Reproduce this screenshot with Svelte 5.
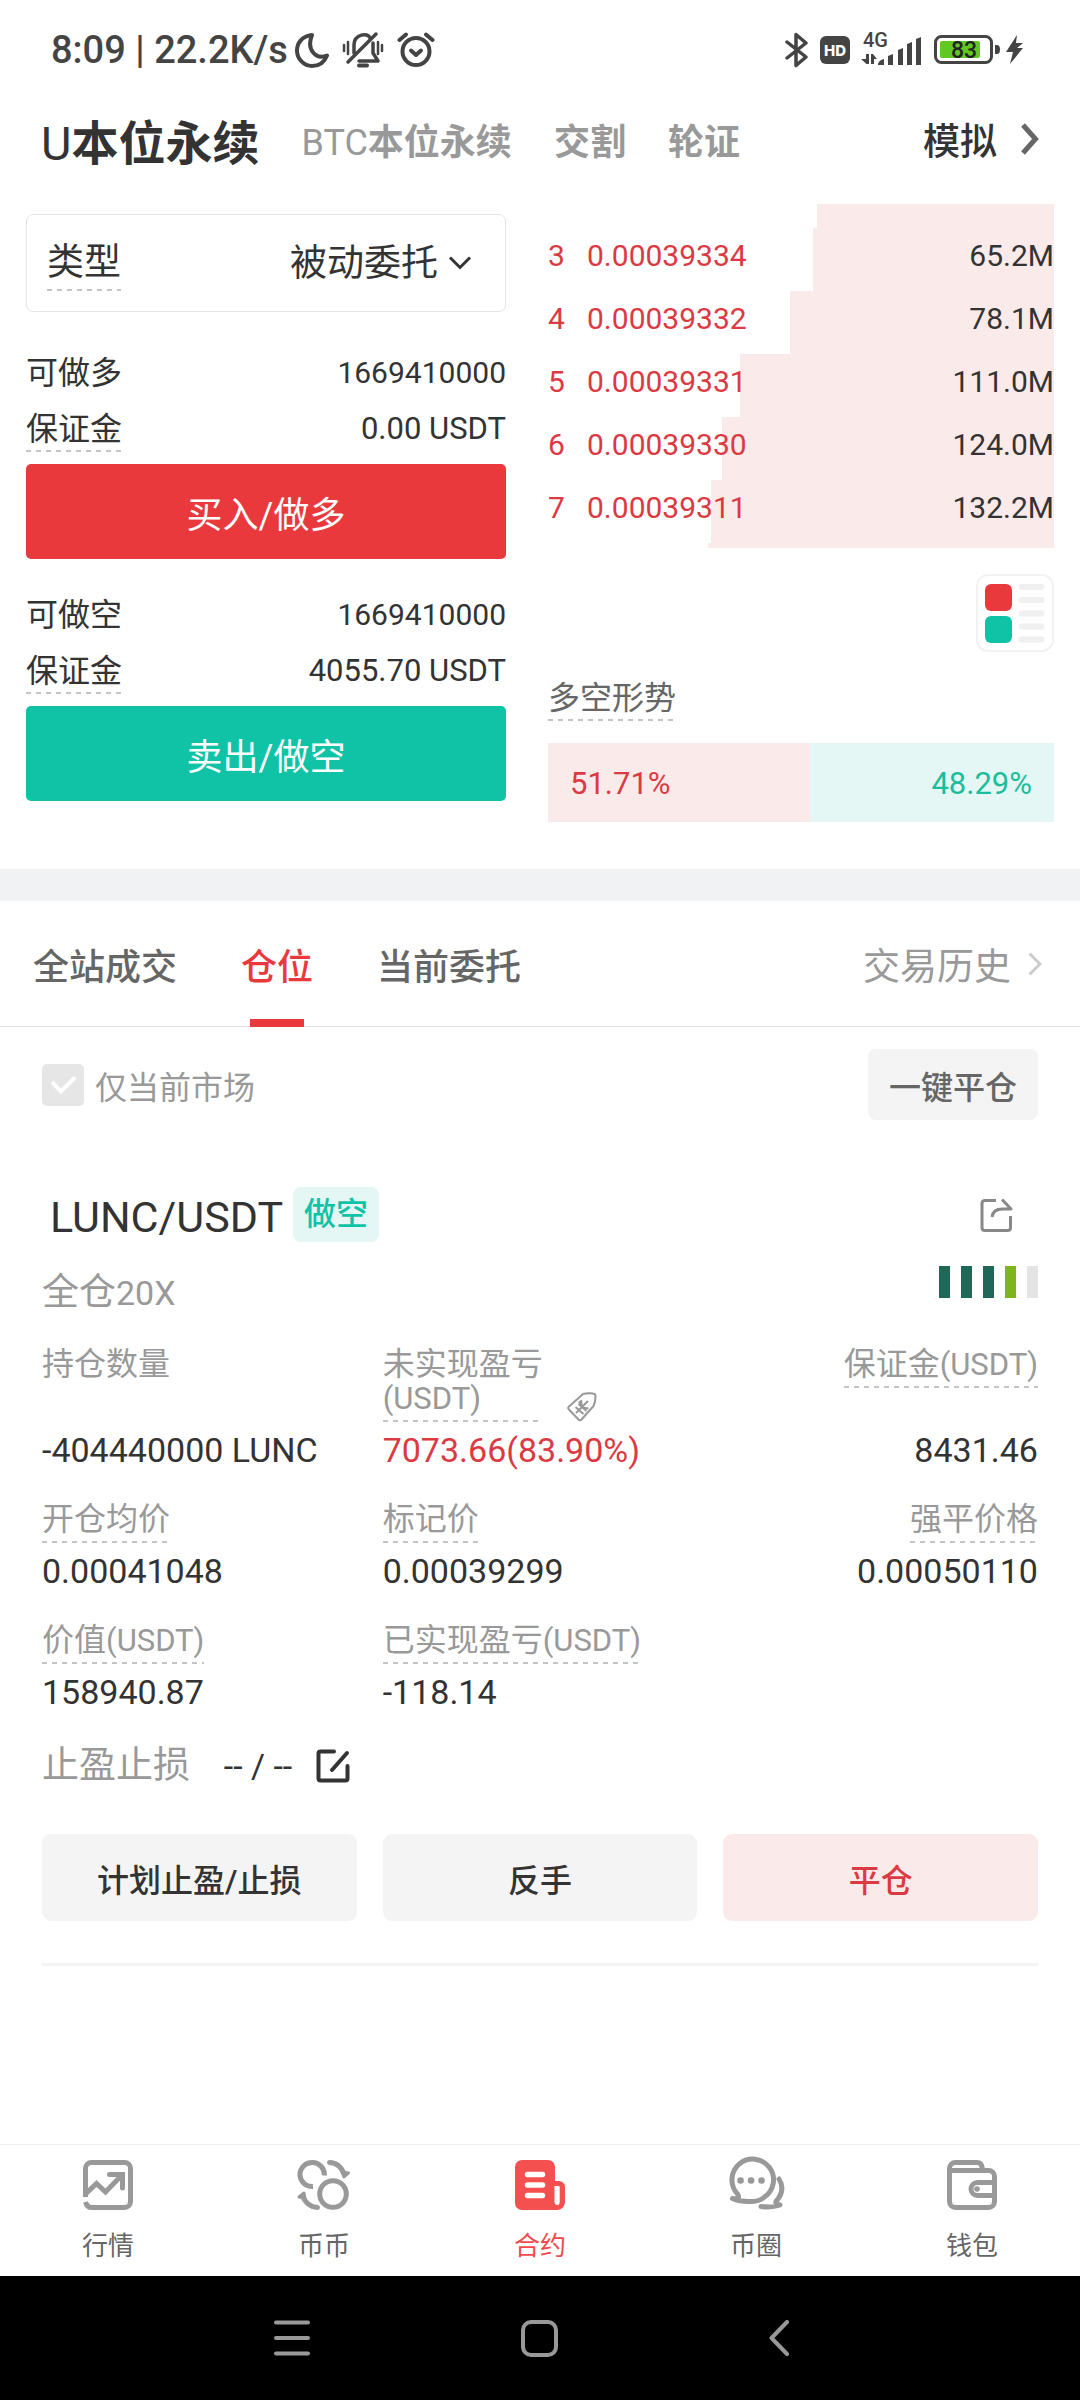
<script lang="ts">
  let orderType = $state('被动委托');
  let market = $state('u');
  let tab = $state('positions');
  let onlyCurrent = $state(true);
  let nav = $state('contract');

  const markets = [
    { id: 'u', latin: 'U', text: '本位永续' },
    { id: 'btc', latin: 'BTC', text: '本位永续' },
    { id: 'delivery', latin: '', text: '交割' },
    { id: 'warrant', latin: '', text: '轮证' },
  ];

  const sides = [
    { id: 'long', label: '可做多', amount: '1669410000', margin: '0.00 USDT', action: '买入/做多' },
    { id: 'short', label: '可做空', amount: '1669410000', margin: '4055.70 USDT', action: '卖出/做空' },
  ];

  const asks = [
    { level: 3, price: '0.00039334', volume: '65.2M', depth: 47.6 },
    { level: 4, price: '0.00039332', volume: '78.1M', depth: 52.2 },
    { level: 5, price: '0.00039331', volume: '111.0M', depth: 62.1 },
    { level: 6, price: '0.00039330', volume: '124.0M', depth: 65.6 },
    { level: 7, price: '0.00039311', volume: '132.2M', depth: 67.8 },
  ];

  const longRatio = 51.71;
  const shortRatio = 48.29;

  const tabs = [
    { id: 'trades', text: '全站成交' },
    { id: 'positions', text: '仓位' },
    { id: 'orders', text: '当前委托' },
  ];

  const fields = [
    { label: '持仓数量', unit: '', value: '-404440000 LUNC', hint: false },
    { label: '未实现盈亏', unit: '(USDT)', value: '7073.66(83.90%)', hint: true, tag: true },
    { label: '保证金', unit: '(USDT)', value: '8431.46', hint: true },
    { label: '开仓均价', unit: '', value: '0.00041048', hint: true },
    { label: '标记价', unit: '', value: '0.00039299', hint: true },
    { label: '强平价格', unit: '', value: '0.00050110', hint: true },
    { label: '价值', unit: '(USDT)', value: '158940.87', hint: true },
    { label: '已实现盈亏', unit: '(USDT)', value: '-118.14', hint: true },
  ];

  const risk = ['dark', 'dark', 'dark', 'light', 'off'];

  const navItems = [
    { id: 'market', text: '行情' },
    { id: 'spot', text: '币币' },
    { id: 'contract', text: '合约' },
    { id: 'community', text: '币圈' },
    { id: 'wallet', text: '钱包' },
  ];
</script>

<div class="app">
  <div class="status">
    <span class="status__time">8:09 | 22.2K/s</span>
    <div class="status__left">
      <svg width="34" height="36" viewBox="0 0 34 36" fill="none" stroke="#444" stroke-width="4" stroke-linejoin="round">
        <path d="M17 3C7 4 2 11 2 18.500C2 27 9 34 17 34C24 34 29.500 30 32 23.500C21 28 11 18 17 3Z" />
      </svg>
      <svg width="42" height="38" viewBox="0 0 42 38" fill="none" stroke="#444" stroke-width="3" stroke-linecap="round">
        <path d="M2 14v6M6 11v12M36 11v12M40 14v6" stroke-width="2.500" />
        <path d="M12 22V14C12 3 26 1 28 7M6 31L34 3" stroke-width="3.500" />
        <path d="M31 12v10l5 8H17" stroke-width="3.500" stroke-linejoin="round" />
        <path d="M17 34.500h8" stroke-width="4" />
      </svg>
      <svg width="38" height="36" viewBox="0 0 38 36" fill="none" stroke="#444" stroke-width="4" stroke-linecap="round">
        <circle cx="19" cy="19.500" r="13.500" />
        <path d="M2.500 8L9 2.500M35.500 8L29 2.500" />
        <path d="M14 18.500l5 4.500 5-4.500" stroke-linejoin="round" />
      </svg>
    </div>
    <div class="status__right">
      <svg width="24" height="36" viewBox="0 0 24 36" fill="none" stroke="#444" stroke-width="3.500" stroke-linejoin="round" stroke-linecap="round">
        <path d="M2 10l19 15-10 8.500V2.500l10 8.500L2 26" />
      </svg>
      <svg width="30" height="28" viewBox="0 0 30 28">
        <rect width="30" height="28" rx="6" fill="#444" />
        <text x="15" y="19.500" text-anchor="middle" font-family="Inter, sans-serif" font-size="15" font-weight="800" fill="#fff">HD</text>
      </svg>
      <svg width="62" height="48" viewBox="0 -6 62 48" fill="#444">
        <text x="2" y="15" font-family="Roboto, sans-serif" font-size="20" font-weight="500">4G</text>
        <path d="M5 22h3v10h-2.500L0 27h5zM10 32V22h2l4 5h-3v5z" />
        <path d="M17 32q1-4 6-5v6h-6zM27 24l5-2v11h-5zM37 18l5-2v17h-5zM46 12l5-2v23h-5zM55 7l5-2v28h-5z" />
      </svg>
      <svg width="90" height="30" viewBox="0 0 90 30">
        <rect x="1.500" y="1.500" width="56" height="26" rx="6" fill="none" stroke="#444" stroke-width="3" />
        <rect x="6" y="6" width="40" height="17" rx="2" fill="#60c820" />
        <path d="M61 10h2q3 0 3 4.500t-3 4.500h-2z" fill="#444" />
        <text x="30" y="22.500" text-anchor="middle" font-family="Roboto, sans-serif" font-size="23" font-weight="500" fill="#222">83</text>
        <path d="M83 0L72 17h7l-3 12 13-16h-6l6-5h-7z" fill="#444" />
      </svg>
    </div>
  </div>

  <header class="header">
    <nav class="markets">
      {#each markets as m}
        <button class="markets__item" class:markets__item--on={market === m.id} onclick={() => (market = m.id)}>
          {#if m.latin}<span class="markets__latin">{m.latin}</span>{/if}{m.text}
        </button>
      {/each}
    </nav>
    <a class="demo" href="#demo">
      模拟
      <svg width="18" height="32" viewBox="0 0 18 32" fill="none" stroke="#666" stroke-width="5">
        <path d="M2 2l12.500 14L2 30" />
      </svg>
    </a>
  </header>

  <section class="trade">
    <div class="order">
      <div class="type">
        <label class="type__label dashed" for="order-type">类型</label>
        <div class="type__control">
          <select id="order-type" class="type__select" bind:value={orderType}>
            <option>被动委托</option>
          </select>
          <svg width="22" height="14" viewBox="0 0 22 14" fill="none" stroke="#333" stroke-width="3">
            <path d="M1 1.500l10 10 10-10" />
          </svg>
        </div>
      </div>
      {#each sides as side}
        <div class="side">
          <div class="side__row">
            <span>{side.label}</span>
            <span class="side__amount">{side.amount}</span>
          </div>
          <div class="side__row">
            <span class="dashed">保证金</span>
            <span class="num">{side.margin}</span>
          </div>
          <button class="side__action side__action--{side.id}">{side.action}</button>
        </div>
      {/each}
    </div>

    <div class="book">
      <div class="asks">
        <div class="ask ask--first"><div class="ask__depth" style:width="46.8%"></div></div>
        {#each asks as ask}
          <div class="ask">
            <div class="ask__depth" style:width="{ask.depth}%"></div>
            <span class="ask__level">{ask.level}</span>
            <span class="ask__price">{ask.price}</span>
            <span class="ask__volume">{ask.volume}</span>
          </div>
        {/each}
        <div class="ask ask--last"><div class="ask__depth" style:width="68.4%"></div></div>
      </div>

      <button class="layout" aria-label="盘口布局">
        <svg width="78" height="78" viewBox="0 0 78 78">
          <rect x="1" y="1" width="76" height="76" rx="11" fill="#fff" stroke="#f0f2f4" stroke-width="2" />
          <rect x="9" y="10" width="27" height="27" rx="6" fill="#e9393d" />
          <rect x="9" y="42" width="27" height="27" rx="6" fill="#11c3a6" />
          <path d="M45.500 13h20M45.500 26h20M45.500 39.500h20M45.500 52.500h20M45.500 65.500h20" stroke="#f0f0f0" stroke-width="6" stroke-linecap="round" />
        </svg>
      </button>

      <span class="trend dashed">多空形势</span>
      <div class="ratio">
        <div class="ratio__long" style:width="{longRatio}%">{longRatio}%</div>
        <div class="ratio__short">{shortRatio}%</div>
      </div>
    </div>
  </section>

  <div class="tabs">
    {#each tabs as t}
      <button class="tabs__item" class:tabs__item--on={tab === t.id} onclick={() => (tab = t.id)}>{t.text}</button>
    {/each}
    <a class="tabs__history" href="#history">
      交易历史
      <svg width="14" height="24" viewBox="0 0 14 24" fill="none" stroke="#ccc" stroke-width="3">
        <path d="M1.500 1.500l10.500 10.500-10.500 10.500" />
      </svg>
    </a>
  </div>

  <main class="position">
    <div class="toolbar">
      <label class="check">
        <input class="check__box" type="checkbox" bind:checked={onlyCurrent} />
        仅当前市场
      </label>
      <button class="toolbar__close">一键平仓</button>
    </div>

    <div class="title">
      <h2 class="title__pair">LUNC/USDT</h2>
      <span class="title__badge">做空</span>
      <button class="title__share" aria-label="分享">
        <svg width="33" height="34" viewBox="0 0 33 34" fill="none" stroke="#888" stroke-width="3">
          <path d="M16 2.500H5q-3 0-3 3v24q0 3 3 3h22.500q3 0 3-3V18" />
          <path d="M22 1.500l9 9.500h-8.500Q13 11 12 19" stroke-linejoin="round" />
        </svg>
      </button>
    </div>

    <div class="lever">
      <span>全仓<span class="lever__num">20X</span></span>
      <div class="risk">
        {#each risk as level}
          <i class="risk__bar risk__bar--{level}"></i>
        {/each}
      </div>
    </div>

    <dl class="fields">
      {#each fields as field}
        <div class="field">
          <dt class="field__head">
            <span class="field__label" class:dashed={field.hint} class:field__label--wrap={field.tag}
              >{field.label}{#if field.tag}<wbr />{/if}<span class="num">{field.unit}</span></span
            >
            {#if field.tag}
              <svg class="field__tag" width="30" height="30" viewBox="0 0 30 30" fill="none" stroke="#999" stroke-width="2" stroke-linejoin="round">
                <path d="M16 2Q20 1 26 1.500Q28.500 1.500 28.500 4Q28.500 10 26.500 14L14.500 27.500Q13 29 11.500 27.500L2 17.500Q.5 16 2 14.500Z" />
                <path d="M8.500 15l8 7M11.500 12l8 7M9 21l12-12M12 9.500l3 6 6.500 1M15 15.500L14 8" />
              </svg>
            {/if}
          </dt>
          <dd class="field__value" class:field__value--red={field.tag}>{field.value}</dd>
        </div>
      {/each}
    </dl>

    <div class="stop">
      <span class="stop__label">止盈止损</span>
      <span class="stop__value">-- / --</span>
      <button class="stop__edit" aria-label="编辑止盈止损">
        <svg width="34" height="34" viewBox="0 0 34 34" fill="none" stroke="#333" stroke-width="4" stroke-linecap="round" stroke-linejoin="round">
          <path d="M18 2.500H4.500q-2 0-2 2v25q0 2 2 2h25q2 0 2-2V17" />
          <path d="M16 21L31 4" />
        </svg>
      </button>
    </div>

    <div class="actions">
      <button class="actions__item">计划止盈/止损</button>
      <button class="actions__item">反手</button>
      <button class="actions__item actions__item--close">平仓</button>
    </div>
  </main>

  <nav class="nav">
    {#each navItems as item}
      <button class="nav__item" class:nav__item--on={nav === item.id} onclick={() => (nav = item.id)}>
        {#if item.id === 'market'}
          <svg width="50" height="50" viewBox="0 0 50 50" fill="none" stroke="#999" stroke-width="5">
            <path d="M2.500 37V8.500a6 6 0 0 1 6-6h33a6 6 0 0 1 6 6v33a6 6 0 0 1-6 6H8.500q-4.500 0-6-5.500" />
            <path d="M1 35.500l12.500-12 9 8.500L39 15" />
            <path d="M26.500 14.500H39.500V28" stroke-linecap="round" />
          </svg>
        {:else if item.id === 'spot'}
          <svg width="54" height="50" viewBox="0 0 54 50" fill="none" stroke="#999" stroke-width="5">
            <path d="M27.300 15.500A12.200 12 0 1 0 16 26.500" />
            <circle cx="36" cy="34" r="13.300" />
            <path d="M32.500 2.500Q43 3 47 14M20.500 47.500Q10 47 5.500 36" stroke-linecap="round" />
            <path d="M45 12l6.500 1-4.500 4zM2 37l5-4 1 5z" stroke-width="3" stroke-linejoin="round" fill="#999" />
          </svg>
        {:else if item.id === 'contract'}
          <svg width="50" height="50" viewBox="0 0 50 50">
            <path d="M7 0h26a7 7 0 0 1 7 7v14h4a6 6 0 0 1 6 6v15a8 8 0 0 1-8 8H7a7 7 0 0 1-7-7V7a7 7 0 0 1 7-7z" fill="#f4504f" />
            <path d="M12.500 14.500H27.500M12.500 25H27.500M12.500 35.500H27.500" stroke="#fff" stroke-width="5.500" stroke-linecap="round" />
            <path d="M39.500 26h4q1.200 0 1.200 1.200V42q0 3-2.500 3t-2.700-3z" fill="#fff" />
          </svg>
        {:else if item.id === 'community'}
          <svg width="58" height="54" viewBox="0 0 58 54" fill="none" stroke="#999" stroke-width="5" stroke-linecap="round" stroke-linejoin="round">
            <path d="M5.500 42.500Q14 43.500 10.500 38A20.800 20.800 0 1 1 37.500 41Q32 46 22 45.500Q12 45.500 5.500 42.500Z" />
            <path d="M52 23Q59 34 49 45.500Q48 48 53 49Q45 52 34 50.500" />
            <path d="M13.500 24.500h.1M24 24.500h.1M34.500 24.500h.1" stroke-width="6.500" />
          </svg>
        {:else}
          <svg width="50" height="50" viewBox="0 0 50 50" fill="none" stroke="#999" stroke-width="5">
            <path d="M2.500 12V8.500a6 6 0 0 1 6-6H30q5 0 5.500 7" />
            <path d="M2.500 10.500h39a6 6 0 0 1 6 6v25a6 6 0 0 1-6 6h-33a6 6 0 0 1-6-6z" />
            <path d="M47 22.500H30.500a6.500 6.500 0 0 0 0 13H47" />
            <circle cx="30" cy="29" r="2.800" fill="#999" stroke="none" />
          </svg>
        {/if}
        <span>{item.text}</span>
      </button>
    {/each}
  </nav>

  <div class="system">
    <button aria-label="最近任务">
      <svg width="36" height="36" viewBox="0 0 36 36"><path d="M2 2.500h32M2 18h32M2 33.500h32" /></svg>
    </button>
    <button aria-label="主页">
      <svg width="37" height="37" viewBox="0 0 37 37"><rect x="2" y="2" width="33" height="33" rx="8" /></svg>
    </button>
    <button aria-label="返回">
      <svg width="20" height="36" viewBox="0 0 20 36"><path d="M18 2L2.500 18 18 34" /></svg>
    </button>
  </div>
</div>

<style>
  :global(body) {
    margin: 0;
    background: #fff;
  }

  .app {
    display: flex;
    flex-direction: column;
    min-height: 100vh;
    color: #333;
    background: #fff;
    font-family: Roboto, 'Noto Sans CJK SC', sans-serif;
    font-size: 32px;
  }
  .app * {
    box-sizing: border-box;
  }

  svg {
    display: block;
    flex: none;
  }

  button,
  select {
    margin: 0;
    padding: 0;
    border: 0;
    background: none;
    color: inherit;
    font: inherit;
  }

  a {
    color: inherit;
    text-decoration: none;
  }

  .num {
    font-size: 31px;
  }

  .dashed {
    background: repeating-linear-gradient(90deg, #c4c4c4 0 5px, transparent 5px 10px) left bottom / 100% 2px no-repeat;
  }

  /* status bar */
  .status {
    display: flex;
    align-items: center;
    height: 100px;
    padding: 0 56px 0 51px;
    color: #444;
  }
  .status__time {
    font-size: 38px;
    font-weight: 500;
  }
  .status__left {
    display: flex;
    align-items: center;
    gap: 13px;
    margin-left: 7px;
  }
  .status__right {
    display: flex;
    align-items: center;
    gap: 11px;
    margin-left: auto;
  }

  /* header */
  .header {
    display: flex;
    align-items: center;
    justify-content: space-between;
    height: 78px;
    padding: 0 41px;
  }
  .markets {
    display: flex;
    align-items: center;
    gap: 42px;
  }
  .markets__item {
    color: #999;
    font-size: 36px;
    font-weight: 700;
    white-space: nowrap;
  }
  .markets__item--on {
    color: #333;
    font-size: 47px;
  }
  .markets__latin {
    font-weight: 400;
  }
  .demo {
    display: flex;
    align-items: center;
    gap: 24px;
    font-size: 37px;
    font-weight: 500;
  }

  /* trade panel */
  .trade {
    display: grid;
    grid-template-columns: 480fr 506fr;
    gap: 42px;
    padding: 26px 26px 47px;
    border-bottom: 32px solid #f0f2f4;
  }
  .type {
    display: flex;
    align-items: center;
    justify-content: space-between;
    height: 98px;
    margin: 10px 0 33px;
    padding: 0 34px 0 20px;
    border: 1px solid #e4e4e4;
    border-radius: 7px;
    font-size: 37px;
  }
  .type__label {
    line-height: 56px;
  }
  .type__control {
    display: flex;
    align-items: center;
    gap: 11px;
  }
  .type__select {
    appearance: none;
  }
  .side + .side {
    margin-top: 28px;
  }
  .side__row {
    display: flex;
    align-items: center;
    justify-content: space-between;
    height: 56px;
    line-height: 46px;
  }
  .side__amount {
    font-size: 30px;
  }
  .side__action {
    width: 100%;
    height: 95px;
    margin-top: 7px;
    border-radius: 5px;
    color: #fff;
    font-size: 36px;
  }
  .side__action--long {
    background: #e9393d;
  }
  .side__action--short {
    background: #11c3a6;
  }

  .book {
    display: flex;
    flex-direction: column;
    align-items: flex-start;
  }
  .asks {
    width: 100%;
  }
  .ask {
    position: relative;
    display: flex;
    height: 63px;
    font-size: 30px;
    line-height: 56px;
  }
  .ask--first {
    height: 24px;
  }
  .ask--last {
    height: 5px;
  }
  .ask__depth {
    position: absolute;
    top: 0;
    right: 0;
    bottom: 0;
    background: #fbeaea;
  }
  .ask__level,
  .ask__price,
  .ask__volume {
    position: relative;
  }
  .ask__level {
    width: 39px;
    color: #db3a43;
  }
  .ask__price {
    color: #db3a43;
  }
  .ask__volume {
    margin-left: auto;
  }
  .layout {
    align-self: flex-end;
    margin: 26px 0 23px;
  }
  .trend {
    color: #666;
    line-height: 46px;
  }
  .ratio {
    display: flex;
    width: 100%;
    height: 79px;
    margin-top: 22px;
    font-size: 31px;
    line-height: 82px;
  }
  .ratio__long {
    padding-left: 22px;
    background: #fbeaea;
    color: #db3a43;
  }
  .ratio__short {
    flex: 1;
    padding-right: 22px;
    background: #e5f7f4;
    color: #1bbd9d;
    text-align: right;
  }

  /* tabs */
  .tabs {
    display: flex;
    align-items: center;
    gap: 64px;
    height: 126px;
    padding: 0 38px 0 33px;
    border-bottom: 1px solid #e0e0e0;
    font-size: 36px;
  }
  .tabs__item {
    position: relative;
    height: 126px;
    color: #666;
    font-weight: 500;
  }
  .tabs__item--on {
    color: #e9393d;
  }
  .tabs__item--on::after {
    content: '';
    position: absolute;
    bottom: 0;
    left: 50%;
    width: 54px;
    height: 8px;
    margin-left: -27px;
    background: #e9393d;
  }
  .tabs__history {
    display: flex;
    align-items: center;
    gap: 17px;
    margin-left: auto;
    color: #999;
    font-size: 37px;
  }

  /* position card */
  .position {
    margin: 22px 42px 0;
    padding-bottom: 42px;
    border-bottom: 3px solid #f3f3f3;
  }
  .toolbar {
    display: flex;
    align-items: center;
    justify-content: space-between;
  }
  .check {
    display: flex;
    align-items: center;
    gap: 11px;
    color: #999;
  }
  .check__box {
    appearance: none;
    width: 42px;
    height: 42px;
    margin: 0;
    border-radius: 5px;
    background: #e6e6e6;
  }
  .check__box:checked {
    background: #e6e6e6 url("data:image/svg+xml,%3Csvg xmlns='http://www.w3.org/2000/svg' viewBox='0 0 42 42' fill='none' stroke='%23fff' stroke-width='4'%3E%3Cpath d='M10 18l9 9.500 14-14'/%3E%3C/svg%3E");
  }
  .toolbar__close {
    height: 71px;
    padding: 0 21px;
    border-radius: 8px;
    background: #f4f4f4;
    color: #666;
    font-weight: 500;
  }

  .title {
    display: flex;
    align-items: flex-end;
    gap: 10px;
    margin-top: 67px;
    padding: 0 25px 0 8px;
  }
  .title__pair {
    margin: 0;
    font-size: 43px;
    font-weight: 400;
    line-height: 50px;
  }
  .title__badge {
    padding: 0 11px;
    border-radius: 8px;
    background: #e5f7f4;
    color: #11c3a6;
    font-weight: 500;
    line-height: 55px;
  }
  .title__share {
    align-self: center;
    margin-left: auto;
  }

  .lever {
    display: flex;
    justify-content: space-between;
    margin-top: 24px;
    color: #999;
    font-size: 37px;
    line-height: 54px;
  }
  .lever__num {
    font-size: 34px;
  }
  .risk {
    display: flex;
    gap: 11px;
  }
  .risk__bar {
    width: 11px;
    height: 32px;
  }
  .risk__bar--dark {
    background: #1f6858;
  }
  .risk__bar--light {
    background: #7cb51d;
  }
  .risk__bar--off {
    background: #e4e4e4;
  }

  .fields {
    display: grid;
    grid-template-columns: repeat(3, 1fr);
    gap: 30px 26px;
    margin: 27px 0 0;
  }
  .field {
    display: flex;
    flex-direction: column;
    justify-content: space-between;
    white-space: nowrap;
  }
  .field:nth-child(3n) {
    align-items: flex-end;
  }
  .field__head {
    display: flex;
    align-items: flex-end;
    color: #999;
    line-height: 34px;
  }
  .field__label {
    padding-bottom: 6px;
  }
  .field__label--wrap {
    width: 160px;
    white-space: normal;
  }
  .field__tag {
    margin-left: 24px;
  }
  .field__value {
    margin: 6px 0 0;
    font-size: 34px;
    line-height: 44px;
  }
  .field__value--red {
    color: #db3a43;
  }

  .stop {
    display: flex;
    align-items: center;
    margin-top: 30px;
    line-height: 44px;
  }
  .stop__label {
    color: #999;
    font-size: 37px;
  }
  .stop__value {
    min-width: 92px;
    margin: 0 12px 0 22px;
    font-size: 34px;
    text-align: center;
  }

  .actions {
    display: grid;
    grid-template-columns: repeat(3, 1fr);
    gap: 26px;
    margin-top: 46px;
  }
  .actions__item {
    height: 87px;
    border-radius: 9px;
    background: #f4f4f4;
    font-weight: 500;
  }
  .actions__item--close {
    background: #fbeaea;
    color: #db3a43;
  }

  /* bottom navigation */
  .nav {
    display: grid;
    grid-template-columns: repeat(5, 1fr);
    height: 132px;
    margin-top: auto;
    border-top: 1px solid #eee;
  }
  .nav__item {
    display: flex;
    flex-direction: column;
    align-items: center;
    justify-content: flex-end;
    gap: 18px;
    padding-bottom: 12px;
    color: #666;
    font-size: 26px;
    line-height: 36px;
  }
  .nav__item--on {
    color: #f04a4d;
  }

  .system {
    display: flex;
    align-items: center;
    justify-content: center;
    gap: 211px;
    height: 124px;
    padding-right: 17px;
    background: #000;
  }
  .system svg {
    fill: none;
    stroke: #999;
    stroke-width: 4;
    stroke-linecap: round;
    stroke-linejoin: round;
  }
</style>
